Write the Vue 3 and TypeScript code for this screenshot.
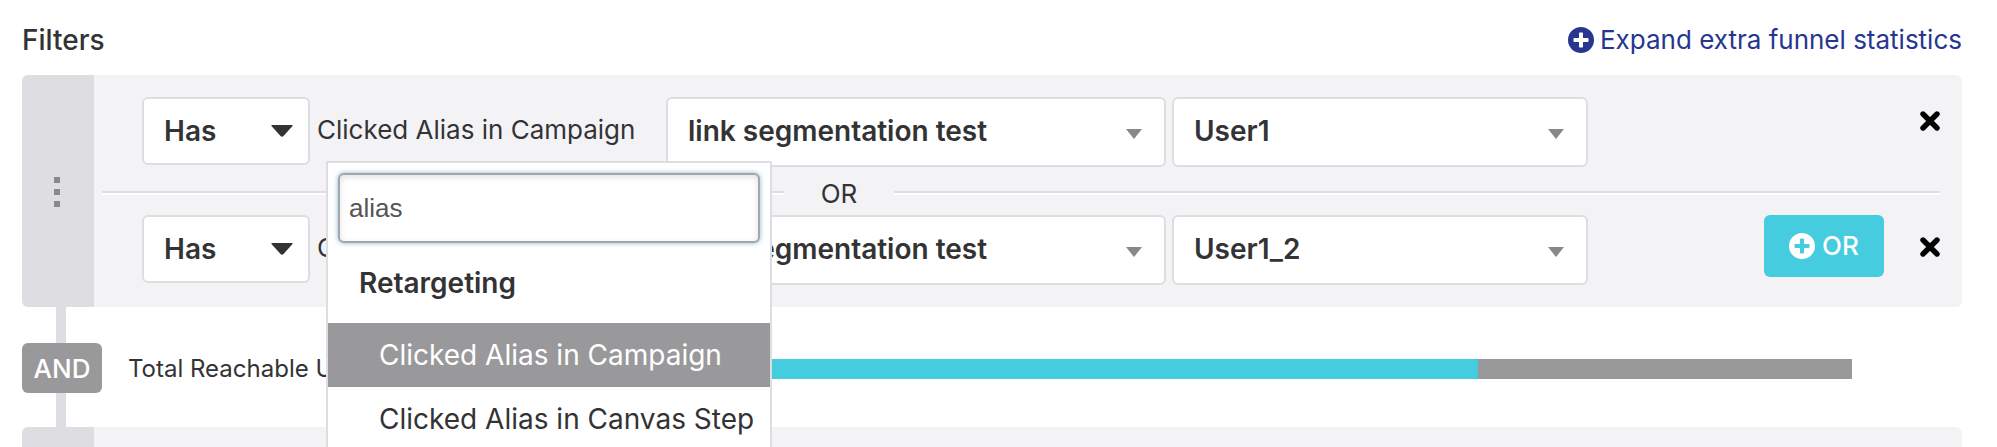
<script setup lang="ts">
import { ref } from 'vue'

interface FilterRow {
  id: number
  operator: string
  link: string
  alias: string
  open: boolean
}

const rows = ref<FilterRow[]>([
  { id: 1, operator: 'Has', link: 'link segmentation test', alias: 'User1', open: true },
  { id: 2, operator: 'Has', link: 'link segmentation test', alias: 'User1_2', open: false },
])
const filterName = 'Clicked Alias in Campaign'
const search = ref('alias')
const options = ['Clicked Alias in Campaign', 'Clicked Alias in Canvas Step']
const active = ref(options[0])
const reachable = 72.66

function removeRow(id: number) {
  rows.value = rows.value.filter((r) => r.id !== id)
}
function addRow() {
  rows.value.push({ id: Date.now(), operator: 'Has', link: 'link segmentation test', alias: 'User1', open: false })
}
</script>

<template>
  <main class="page">
    <header class="head">
      <h1 class="title">Filters</h1>
      <a class="expand" href="#stats">
        <svg class="plus" viewBox="0 0 26 26" aria-hidden="true">
          <path fill="currentColor" fill-rule="evenodd" d="M13 0a13 13 0 1 0 0 26a13 13 0 1 0 0-26zM11.8 5.5h2.4q.8 0 .8.8V11h4.7q.8 0 .8.8v2.4q0 .8-.8.8H15v4.7q0 .8-.8.8h-2.4q-.8 0-.8-.8V15H6.300q-.8 0-.8-.8v-2.400q0-.8.8-.8H11V6.300q0-.8.8-.8z" />
        </svg>
        <span>Expand extra funnel statistics</span>
      </a>
    </header>

    <section class="card" aria-label="Filter group">
      <div class="handle"><i></i><i></i><i></i></div>
      <div class="body">
        <template v-for="(row, i) in rows" :key="row.id">
          <div v-if="i > 0" class="divider">
            <span class="line"></span>
            <span class="word">OR</span>
            <span class="line"></span>
          </div>
          <div class="row">
            <div class="pick operator">
              <select v-model="row.operator" aria-label="Operator">
                <option>Has</option>
                <option>Has not</option>
              </select>
              <svg class="caret dark" viewBox="0 0 22 12" aria-hidden="true"><path fill="currentColor" d="M1 0H21Q22 .3 21.500 1L12.500 11Q11 12.600 9.500 11L.5 1Q0 .3 1 0z" /></svg>
            </div>
            <div class="name">
              <button type="button" class="trigger" :aria-expanded="row.open" @click="row.open = !row.open">{{ filterName }}</button>
              <div v-if="row.open" class="menu">
                <input v-model="search" class="search" type="text" aria-label="Search filters" />
                <h2 class="group">Retargeting</h2>
                <button
                  v-for="option in options"
                  :key="option"
                  type="button"
                  class="option"
                  :class="{ active: option === active }"
                  @mouseenter="active = option"
                >{{ option }}</button>
              </div>
            </div>
            <div class="pick link">
              <select v-model="row.link" aria-label="Campaign"><option>link segmentation test</option></select>
              <svg class="caret" viewBox="0 0 16 10" aria-hidden="true"><path fill="currentColor" d="M0 0H16L8 10z" /></svg>
            </div>
            <div class="pick alias">
              <select v-model="row.alias" aria-label="Alias">
                <option>User1</option>
                <option>User1_2</option>
              </select>
              <svg class="caret" viewBox="0 0 16 10" aria-hidden="true"><path fill="currentColor" d="M0 0H16L8 10z" /></svg>
            </div>
            <div class="actions" :class="{ first: i === 0 }">
              <button v-if="i === rows.length - 1" type="button" class="add" @click="addRow">
                <svg class="plus" viewBox="0 0 26 26" aria-hidden="true">
                  <path fill="currentColor" fill-rule="evenodd" d="M13 0a13 13 0 1 0 0 26a13 13 0 1 0 0-26zM11.8 5.5h2.4q.8 0 .8.8V11h4.7q.8 0 .8.8v2.4q0 .8-.8.8H15v4.7q0 .8-.8.8h-2.4q-.8 0-.8-.8V15H6.300q-.8 0-.8-.8v-2.400q0-.8.8-.8H11V6.300q0-.8.8-.8z" />
                </svg>
                <span>OR</span>
              </button>
              <button type="button" class="remove" aria-label="Remove filter" @click="removeRow(row.id)">
                <svg viewBox="0 0 20 20" aria-hidden="true"><path d="M3 3L17 17M17 3L3 17" fill="none" stroke="#000" stroke-width="5.400" stroke-linecap="round" /></svg>
              </button>
            </div>
          </div>
        </template>
      </div>
    </section>

    <section class="between">
      <span class="and">AND</span>
      <span class="total">Total Reachable Users</span>
      <div class="bar" role="img" aria-label="Reachable users">
        <div class="fill" :style="{ width: reachable + '%' }"></div>
      </div>
    </section>

    <section class="card next" aria-label="Filter group">
      <div class="handle"></div>
    </section>
  </main>
</template>

<style>
body {
  background: #fff;
}
</style>

<style scoped>
.page {
  box-sizing: border-box;
  height: 100vh;
  overflow: hidden;
  padding: 0 35px 0 22px;
  font-family: Inter, "Liberation Sans", sans-serif;
  font-size: 26px;
  line-height: 32px;
  color: #333335;
}
.page * {
  box-sizing: border-box;
}
button,
select,
input {
  margin: 0;
  padding: 0;
  border: 0;
  background: none;
  font: inherit;
  color: inherit;
}
.head {
  display: flex;
  align-items: center;
  justify-content: space-between;
  height: 75px;
  padding-top: 4px;
}
.title {
  margin: 0;
  font-size: 28px;
  font-weight: 500;
}
.expand {
  display: flex;
  align-items: center;
  gap: 6px;
  color: #27368f;
  text-decoration: none;
}
.plus {
  width: 26px;
  height: 26px;
}
.card {
  display: flex;
  border-radius: 6px;
  background: #f3f3f6;
}
.handle {
  display: flex;
  flex: none;
  flex-direction: column;
  align-items: center;
  justify-content: center;
  gap: 6px;
  width: 72px;
  padding: 2px 2px 0 0;
  border-radius: 6px 0 0 6px;
  background: #dddde2;
}
.handle i {
  width: 6px;
  height: 6px;
  background: #8a8a8a;
}
.body {
  flex: 1;
  padding: 22px 22px 22px 8px;
}
.row {
  display: flex;
  height: 70px;
  padding-left: 40px;
}
.pick {
  position: relative;
  flex: none;
}
.pick select {
  width: 100%;
  height: 70px;
  padding: 0 48px 2px 20px;
  border: 2px solid #dddde2;
  border-radius: 6px;
  background: #fff;
  appearance: none;
  font-size: 28px;
  font-weight: 600;
}
.operator {
  width: 168px;
}
.operator select {
  height: 68px;
  padding-bottom: 0;
}
.link {
  width: 500px;
  margin-right: 6px;
}
.alias {
  width: 416px;
}
.caret {
  position: absolute;
  top: 32px;
  right: 24px;
  width: 16px;
  height: 10px;
  color: #888;
  pointer-events: none;
}
.caret.dark {
  top: 28px;
  right: 17px;
  width: 22px;
  height: 12px;
  color: #333335;
}
.name {
  position: relative;
  flex: none;
  width: 356px;
  padding: 17px 0 0 7px;
}
.trigger {
  white-space: nowrap;
}
.menu {
  position: absolute;
  z-index: 2;
  top: 64px;
  left: 16px;
  width: 446px;
  padding: 10px 0;
  border: 2px solid #dddde2;
  background: #fff;
}
.search {
  display: block;
  width: 422px;
  height: 70px;
  margin: 0 10px;
  padding: 0 9px;
  border: 2px solid #a6a6a8;
  border-radius: 6px;
  background: #fff;
  box-shadow: 0 0 5px #7fb8d4, inset 0 2px 6px rgba(0, 0, 0, 0.12);
  font-family: "Liberation Sans", sans-serif;
  color: #555;
  outline: none;
}
.group {
  margin: 0;
  padding: 24px 31px;
  font-size: 28px;
  font-weight: 600;
}
.option {
  display: block;
  width: 100%;
  height: 64px;
  padding-left: 51px;
  font-size: 28px;
  text-align: left;
  white-space: nowrap;
}
.option.active {
  background: #99999b;
  color: #fff;
}
.actions {
  display: flex;
  flex: 1;
  align-items: flex-start;
  justify-content: flex-end;
  gap: 36px;
}
.add {
  display: flex;
  align-items: center;
  justify-content: center;
  gap: 7px;
  width: 120px;
  height: 62px;
  border-radius: 6px;
  background: #45ccde;
  color: #fff;
  font-weight: 500;
}
.remove {
  width: 20px;
  height: 20px;
  margin-top: 22px;
}
.first .remove {
  margin-top: 14px;
}
.remove svg {
  display: block;
  width: 20px;
  height: 20px;
}
.divider {
  display: grid;
  grid-template-columns: 682fr 110px 1046fr;
  align-items: center;
  height: 48px;
  padding-top: 6px;
}
.line {
  height: 4px;
  border-top: 2px solid #dddde2;
  background: #fff;
}
.divider .line {
  margin-bottom: 2px;
}
.word {
  text-align: center;
}
.between {
  display: flex;
  align-items: center;
  height: 120px;
  padding: 2px 110px 0 0;
  background: linear-gradient(#dddde2, #dddde2) 34px 0 / 10px 100% no-repeat;
  font-size: 24px;
}
.and {
  flex: none;
  width: 80px;
  padding-top: 2px;
  border-radius: 6px;
  background: #99999b;
  color: #fff;
  font-size: 26px;
  font-weight: 500;
  line-height: 48px;
  text-align: center;
}
.total {
  flex: none;
  width: 382px;
  padding: 2px 0 0 26px;
}
.bar {
  flex: 1;
  height: 20px;
  margin-top: 2px;
  background: #99999b;
}
.fill {
  height: 20px;
  background: #45ccde;
}
.next {
  height: 80px;
}
</style>
